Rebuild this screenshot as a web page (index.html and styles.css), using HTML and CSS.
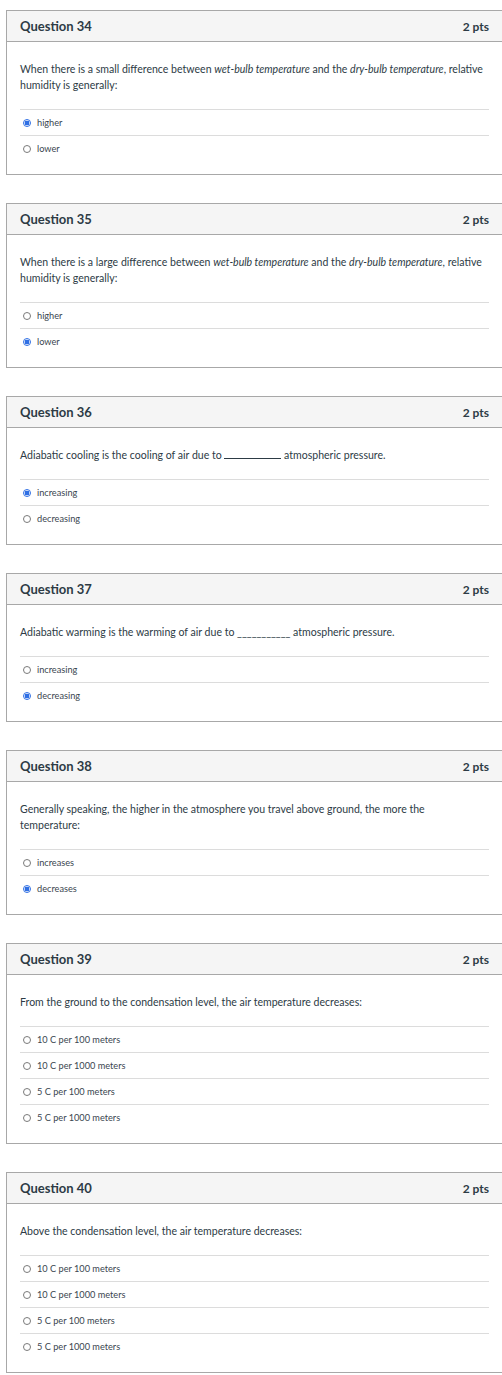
FILE: index.html
```html
<!DOCTYPE html>
<html>
<head>
<meta charset="utf-8">
<link rel="stylesheet" href="styles.css">
</head>
<body>
<div class="quiz">

<div class="card">
  <div class="card-head"><span class="title">Question 34</span><span class="pts">2 pts</span></div>
  <div class="card-body">
    <p class="q">When there is a small difference between <em>wet-bulb temperature</em> and the <em>dry-bulb temperature</em>, relative humidity is generally:</p>
    <ul class="opts">
      <li><span class="radio checked"></span>higher</li>
      <li><span class="radio"></span>lower</li>
    </ul>
  </div>
</div>

<div class="card">
  <div class="card-head"><span class="title">Question 35</span><span class="pts">2 pts</span></div>
  <div class="card-body">
    <p class="q">When there is a large difference between <em>wet-bulb temperature</em> and the <em>dry-bulb temperature</em>, relative humidity is generally:</p>
    <ul class="opts">
      <li><span class="radio"></span>higher</li>
      <li><span class="radio checked"></span>lower</li>
    </ul>
  </div>
</div>

<div class="card">
  <div class="card-head"><span class="title">Question 36</span><span class="pts">2 pts</span></div>
  <div class="card-body">
    <p class="q">Adiabatic cooling is the cooling of air due to <span class="blank"></span> atmospheric pressure.</p>
    <ul class="opts">
      <li><span class="radio checked"></span>increasing</li>
      <li><span class="radio"></span>decreasing</li>
    </ul>
  </div>
</div>

<div class="card">
  <div class="card-head"><span class="title">Question 37</span><span class="pts">2 pts</span></div>
  <div class="card-body">
    <p class="q">Adiabatic warming is the warming of air due to ___________ atmospheric pressure.</p>
    <ul class="opts">
      <li><span class="radio"></span>increasing</li>
      <li><span class="radio checked"></span>decreasing</li>
    </ul>
  </div>
</div>

<div class="card">
  <div class="card-head"><span class="title">Question 38</span><span class="pts">2 pts</span></div>
  <div class="card-body">
    <p class="q">Generally speaking, the higher in the atmosphere you travel above ground, the more the<br>temperature:</p>
    <ul class="opts">
      <li><span class="radio"></span>increases</li>
      <li><span class="radio checked"></span>decreases</li>
    </ul>
  </div>
</div>

<div class="card">
  <div class="card-head"><span class="title">Question 39</span><span class="pts">2 pts</span></div>
  <div class="card-body">
    <p class="q">From the ground to the condensation level, the air temperature decreases:</p>
    <ul class="opts">
      <li><span class="radio"></span>10 C per 100 meters</li>
      <li><span class="radio"></span>10 C per 1000 meters</li>
      <li><span class="radio"></span>5 C per 100 meters</li>
      <li><span class="radio"></span>5 C per 1000 meters</li>
    </ul>
  </div>
</div>

<div class="card">
  <div class="card-head"><span class="title">Question 40</span><span class="pts">2 pts</span></div>
  <div class="card-body">
    <p class="q">Above the condensation level, the air temperature decreases:</p>
    <ul class="opts">
      <li><span class="radio"></span>10 C per 100 meters</li>
      <li><span class="radio"></span>10 C per 1000 meters</li>
      <li><span class="radio"></span>5 C per 100 meters</li>
      <li><span class="radio"></span>5 C per 1000 meters</li>
    </ul>
  </div>
</div>

</div>
</body>
</html>
```

FILE: styles.css
```css
html, body {
  margin: 0;
  padding: 0;
  overflow-x: hidden;
  background: #ffffff;
}

body {
  font-family: Lato, "Open Sans", sans-serif;
  color: #2d3b45;
}

.quiz {
  padding-top: 10px;
  display: flex;
  flex-direction: column;
  gap: 28px;
}

.card {
  box-sizing: border-box;
  width: 497px;
  margin-left: 6px;
  border: 1px solid #a8a8a8;
  background: #ffffff;
}

.card-head {
  box-sizing: border-box;
  height: 31px;
  background: #f5f5f5;
  border-bottom: 1px solid #a8a8a8;
  display: flex;
  align-items: center;
  justify-content: space-between;
  padding: 0 13px;
}

.title {
  font-size: 13px;
  font-weight: 700;
  color: #2d3b45;
}

.pts {
  font-size: 12px;
  font-weight: 700;
  color: #2d3b45;
}

.card-body {
  padding: 19px 13px 13px 13px;
}

.q {
  margin: 0 0 16px 0;
  font-size: 10.55px;
  line-height: 16px;
  color: #2d3b45;
}

.q em {
  font-style: italic;
}

.blank {
  display: inline-block;
  width: 57px;
  height: 1px;
  border-bottom: 1px solid #2d3b45;
  vertical-align: baseline;
}

.opts {
  list-style: none;
  margin: 0;
  padding: 0;
}

.opts li {
  height: 26px;
  box-sizing: border-box;
  border-top: 1px solid #dcdcdc;
  display: flex;
  align-items: center;
  font-size: 9.2px;
  color: #3a4650;
  padding-left: 3px;
}

.radio {
  box-sizing: border-box;
  width: 8px;
  height: 8px;
  border-radius: 50%;
  border: 1px solid #7a7a7a;
  background: #ffffff;
  margin-right: 6px;
  flex: none;
}

.radio.checked {
  border: 1px solid #2f6fe4;
  background: radial-gradient(circle, #2f6fe4 0 2.3px, #ffffff 2.6px);
}
```
